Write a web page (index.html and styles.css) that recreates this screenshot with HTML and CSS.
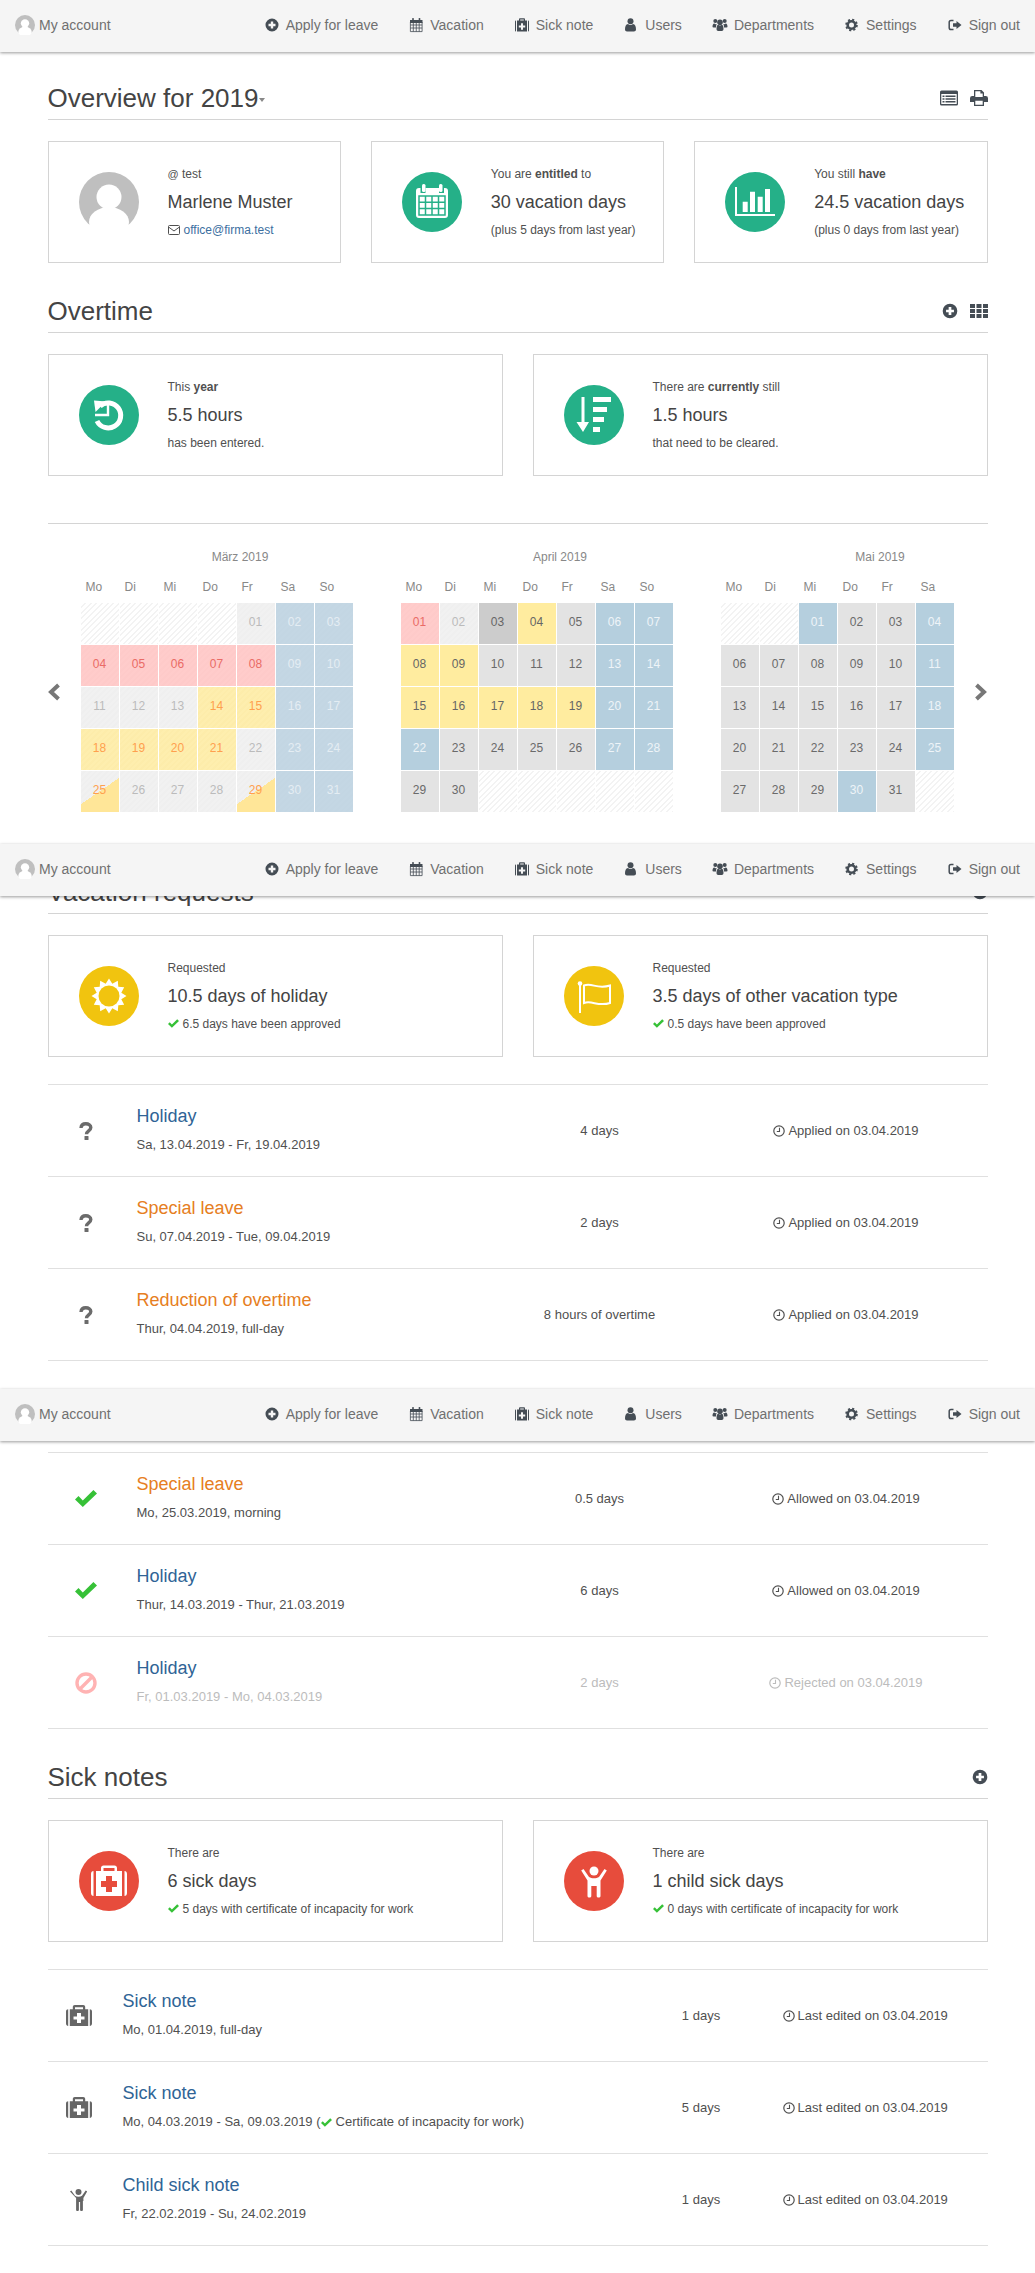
FILE: index.html
```html
<!DOCTYPE html>
<html lang="en">
<head>
    <meta charset="UTF-8">
    <title>Overview for 2019</title>
    <link rel="stylesheet" href="styles.css">
</head>
<body>
    <svg class="sprite" xmlns="http://www.w3.org/2000/svg">
        <symbol id="i-avatar" viewBox="0 0 60 60">
            <circle cx="30" cy="30" r="30" fill="#bfbfbf"/>
            <circle cx="30" cy="25" r="12.500" fill="#fff"/>
            <ellipse cx="30" cy="50" rx="20" ry="15" fill="#fff"/>
        </symbol>
        <symbol id="i-plus" viewBox="0 0 16 16">
            <path fill-rule="evenodd" d="M8 1.500a6.500 6.500 0 1 0 0 13 6.500 6.500 0 0 0 0-13zM6.800 4.500h2.400v2.300h2.300v2.400H9.200v2.300H6.800V9.200H4.500V6.800h2.300z"/>
        </symbol>
        <symbol id="i-calendar" viewBox="0 0 16 16">
            <path d="M2 3h12.500v3H2z"/>
            <rect x="4.200" y="1" width="1.600" height="3" rx=".6"/>
            <rect x="10.700" y="1" width="1.600" height="3" rx=".6"/>
            <path fill="none" stroke="currentColor" stroke-width=".8" d="M2.400 5v9.600h11.700V5M2.400 8h11.700M2.400 11h11.700M5.300 6v8.600M8.250 6v8.600M11.200 6v8.600"/>
        </symbol>
        <symbol id="i-medkit" viewBox="0 0 16 16">
            <path fill-rule="evenodd" d="M1 4.800C1 4 1.500 3.500 2 3.500v11c-.5 0-1-.5-1-1.300zM3 3.500h2V2.300C5 1.600 5.500 1.200 6 1.200h4c.5 0 1 .4 1 1.100v1.200h2v11H3zM6.200 3.500h3.600V2.500H6.200zM7 6.200v2.300H4.800v2H7v2.300h2v-2.300h2.200v-2H9V6.200zM14 3.500c.5 0 1 .5 1 1.300v8.400c0 .8-.5 1.300-1 1.300z"/>
        </symbol>
        <symbol id="i-user" viewBox="0 0 16 16">
            <circle cx="7.500" cy="4.200" r="3"/>
            <path d="M2 12.500c0-3 .8-5.200 3-5.500.7.600 1.500.9 2.500.9s1.800-.3 2.500-.9c2.200.3 3 2.500 3 5.500 0 1.300-.9 2-2 2H4c-1.100 0-2-.7-2-2z"/>
        </symbol>
        <symbol id="i-users" viewBox="0 0 16 16">
            <circle cx="3.300" cy="4" r="2"/>
            <circle cx="12.700" cy="4" r="2"/>
            <circle cx="8" cy="5.200" r="2.800"/>
            <path d="M.5 10c0-2 .6-3.400 1.800-3.400.5.400 1 .6 1.600.6l.9-.1C4.200 8 4 9 4 10.500H1.500c-.6 0-1-.2-1-.5zM15.500 10c0-2-.6-3.400-1.800-3.400-.5.400-1 .6-1.600.6l-.9-.1c.6.900.8 1.900.8 3.400h2.500c.6 0 1-.2 1-.5zM4.500 12c0-2.700.8-4.200 1.800-4.200.5.400 1 .6 1.700.6s1.200-.2 1.700-.6c1 0 1.800 1.500 1.800 4.200 0 1.200-.7 2-1.700 2H6.200c-1 0-1.700-.8-1.700-2z"/>
        </symbol>
        <symbol id="i-cog" viewBox="0 0 16 16">
            <circle cx="7.500" cy="8" r="3.800" fill="none" stroke="currentColor" stroke-width="2.600"/>
            <circle cx="7.500" cy="8" r="5.400" fill="none" stroke="currentColor" stroke-width="1.800" stroke-dasharray="2.120 2.120"/>
        </symbol>
        <symbol id="i-signout" viewBox="0 0 16 16">
            <path fill="none" stroke="currentColor" stroke-width="1.500" d="M6.500 3.500H4A1.800 1.800 0 0 0 2.200 5.300v5.400A1.800 1.800 0 0 0 4 12.500h2.500"/>
            <path d="M9.500 4l5 4-5 4V9.800H6V6.200h3.500z"/>
        </symbol>
        <symbol id="i-listalt" viewBox="0 0 18 15">
            <path fill-rule="evenodd" d="M1.500 0h15A1.500 1.500 0 0 1 18 1.500v12a1.500 1.500 0 0 1-1.500 1.500h-15A1.500 1.500 0 0 1 0 13.500v-12A1.500 1.500 0 0 1 1.500 0zM1.300 3.500v10h15.400v-10zM2.500 5h2v1.500h-2zM5.500 5h10v1.500h-10zM2.500 7.700h2v1.500h-2zM5.500 7.700h10v1.500h-10zM2.500 10.400h2v1.500h-2zM5.500 10.400h10v1.500h-10z"/>
        </symbol>
        <symbol id="i-print" viewBox="0 0 18 16">
            <path fill-rule="evenodd" d="M4 0h7.500L14 2.500V6h1.800A2.200 2.200 0 0 1 18 8.200V12h-4v4H4v-4H0V8.200A2.200 2.200 0 0 1 2.200 6H4zM5.300 1.300V7h7.400V3.500h-2.300V1.300zM5.300 10.800v3.900h7.400v-3.900z"/>
        </symbol>
        <symbol id="i-th" viewBox="0 0 18 14">
            <path d="M0 0h5v4H0zM6.500 0h5v4h-5zM13 0h5v4h-5zM0 5h5v4H0zM6.500 5h5v4h-5zM13 5h5v4h-5zM0 10h5v4H0zM6.500 10h5v4h-5zM13 10h5v4h-5z"/>
        </symbol>
        <symbol id="i-check" viewBox="0 0 22 17">
            <path d="M0 9.500l3.500-3.400 4.300 4.300L18.400 0 22 3.500 7.800 17z"/>
        </symbol>
        <symbol id="i-question" viewBox="0 0 14 18">
            <path fill="none" stroke="currentColor" stroke-width="3.400" d="M2 6C2.200 3 4.300 1.800 6.800 1.800c2.800 0 5 1.400 5 3.800 0 3.400-4.300 3.300-4.300 6.700"/>
            <rect x="5.500" y="14" width="4" height="4" rx=".6"/>
        </symbol>
        <symbol id="i-ban" viewBox="0 0 22 22">
            <circle cx="11" cy="11" r="9" fill="none" stroke="currentColor" stroke-width="3.400"/>
            <path stroke="currentColor" stroke-width="3.400" d="M4.500 17.500l13-13"/>
        </symbol>
        <symbol id="i-clock" viewBox="0 0 12 12">
            <circle cx="6" cy="6" r="5.200" fill="none" stroke="currentColor" stroke-width="1.200"/>
            <path fill="none" stroke="currentColor" stroke-width="1.100" d="M6.500 2.800v3.700H3.800"/>
        </symbol>
        <symbol id="i-mail" viewBox="0 0 12 10">
            <rect x=".5" y=".5" width="11" height="9" rx="1" fill="none" stroke="currentColor"/>
            <path fill="none" stroke="currentColor" d="M.8 2.200L6 6l5.200-3.800"/>
        </symbol>
        <symbol id="i-kit" viewBox="0 0 26 21">
            <path fill-rule="evenodd" d="M0 6.500C0 5 1 4.200 2.200 4.200V21C1 21 0 20 0 18.500zM3.800 4.200h3V2c0-1.200.8-2 2-2h8.400c1.200 0 2 .8 2 2v2.200h3V21H3.800zM9 4.200h8V2.200H9zM11 8v3.500H7.500v3H11V18h4v-3.500h3.500v-3H15V8zM23.800 4.200c1.200 0 2.200.8 2.200 2.300v12c0 1.500-1 2.500-2.200 2.500z"/>
        </symbol>
        <symbol id="i-child" viewBox="0 0 17 22">
            <circle cx="8.500" cy="3" r="3"/>
            <path d="M1.300 1.500l3.700 5.300c1 .7 2.100 1 3.500 1s2.500-.3 3.500-1l3.700-5.300 1.500 1-3.800 6.500v3H12.900V21c0 1.300-2.800 1.300-2.800 0v-8H8.900v8c0 1.300-2.800 1.300-2.800 0V9L0 2.500z"/>
        </symbol>
    </svg>

    <nav class="nav nav-first">
        <a class="nav-account"><svg class="nav-avatar"><use href="#i-avatar"/></svg>My account</a>
        <div class="nav-links">
            <a class="nav-item"><svg class="nav-icon"><use href="#i-plus"/></svg>Apply for leave</a>
            <a class="nav-item"><svg class="nav-icon"><use href="#i-calendar"/></svg>Vacation</a>
            <a class="nav-item"><svg class="nav-icon"><use href="#i-medkit"/></svg>Sick note</a>
            <a class="nav-item"><svg class="nav-icon"><use href="#i-user"/></svg>Users</a>
            <a class="nav-item"><svg class="nav-icon"><use href="#i-users"/></svg>Departments</a>
            <a class="nav-item"><svg class="nav-icon"><use href="#i-cog"/></svg>Settings</a>
            <a class="nav-item"><svg class="nav-icon"><use href="#i-signout"/></svg>Sign out</a>
        </div>
    </nav>
    <nav class="nav nav-second">
        <a class="nav-account"><svg class="nav-avatar"><use href="#i-avatar"/></svg>My account</a>
        <div class="nav-links">
            <a class="nav-item"><svg class="nav-icon"><use href="#i-plus"/></svg>Apply for leave</a>
            <a class="nav-item"><svg class="nav-icon"><use href="#i-calendar"/></svg>Vacation</a>
            <a class="nav-item"><svg class="nav-icon"><use href="#i-medkit"/></svg>Sick note</a>
            <a class="nav-item"><svg class="nav-icon"><use href="#i-user"/></svg>Users</a>
            <a class="nav-item"><svg class="nav-icon"><use href="#i-users"/></svg>Departments</a>
            <a class="nav-item"><svg class="nav-icon"><use href="#i-cog"/></svg>Settings</a>
            <a class="nav-item"><svg class="nav-icon"><use href="#i-signout"/></svg>Sign out</a>
        </div>
    </nav>
    <nav class="nav nav-third">
        <a class="nav-account"><svg class="nav-avatar"><use href="#i-avatar"/></svg>My account</a>
        <div class="nav-links">
            <a class="nav-item"><svg class="nav-icon"><use href="#i-plus"/></svg>Apply for leave</a>
            <a class="nav-item"><svg class="nav-icon"><use href="#i-calendar"/></svg>Vacation</a>
            <a class="nav-item"><svg class="nav-icon"><use href="#i-medkit"/></svg>Sick note</a>
            <a class="nav-item"><svg class="nav-icon"><use href="#i-user"/></svg>Users</a>
            <a class="nav-item"><svg class="nav-icon"><use href="#i-users"/></svg>Departments</a>
            <a class="nav-item"><svg class="nav-icon"><use href="#i-cog"/></svg>Settings</a>
            <a class="nav-item"><svg class="nav-icon"><use href="#i-signout"/></svg>Sign out</a>
        </div>
    </nav>

    <main class="container">
        <div class="heading">
            <h1 class="heading-title">Overview for 2019<span class="caret"></span></h1>
            <div class="heading-actions">
                <svg class="action-icon"><use href="#i-listalt"/></svg>
                <svg class="action-icon"><use href="#i-print"/></svg>
            </div>
        </div>
        <div class="boxes boxes-three">
            <div class="box">
                <svg class="box-icon"><use href="#i-avatar"/></svg>
                <div class="box-text">
                    <div class="box-line"><span class="at">@</span> test</div>
                    <div class="box-main">Marlene Muster</div>
                    <div class="box-line"><svg class="mail-icon"><use href="#i-mail"/></svg><a class="mail-link">office@firma.test</a></div>
                </div>
            </div>
            <div class="box">
                <svg class="box-icon" viewBox="0 0 60 60">
                    <circle cx="30" cy="30" r="30" fill="#25b088"/>
                    <rect x="20" y="12" width="3.500" height="8" rx="1.500" fill="#fff"/>
                    <rect x="37" y="12" width="3.500" height="8" rx="1.500" fill="#fff"/>
                    <path fill="#fff" d="M14 19a3 3 0 0 1 3-3h1.500v5h5v-5h13.500v5h5v-5H43a3 3 0 0 1 3 3v24a3 3 0 0 1-3 3H17a3 3 0 0 1-3-3z"/>
                    <path fill="none" stroke="#25b088" stroke-width="1.500" d="M17 24h26v19H17zM17 30.300h26M17 36.600h26M23.500 24v19M30 24v19M36.500 24v19"/>
                </svg>
                <div class="box-text">
                    <div class="box-line">You are <b>entitled</b> to</div>
                    <div class="box-main">30 vacation days</div>
                    <div class="box-line">(plus 5 days from last year)</div>
                </div>
            </div>
            <div class="box">
                <svg class="box-icon" viewBox="0 0 60 60">
                    <circle cx="30" cy="30" r="30" fill="#25b088"/>
                    <path fill="#fff" d="M10 15h2v27h38v2H10zM17.700 29.700h5V40h-5zM25 19.700h5V40h-5zM32.700 24.700h5V40h-5zM40 17h5v23h-5z"/>
                </svg>
                <div class="box-text">
                    <div class="box-line">You still <b>have</b></div>
                    <div class="box-main">24.5 vacation days</div>
                    <div class="box-line">(plus 0 days from last year)</div>
                </div>
            </div>
        </div>

        <div class="heading heading-next">
            <h2 class="heading-title">Overtime</h2>
            <div class="heading-actions">
                <svg class="action-icon plus-icon"><use href="#i-plus"/></svg>
                <svg class="action-icon"><use href="#i-th"/></svg>
            </div>
        </div>
        <div class="boxes boxes-two">
            <div class="box">
                <svg class="box-icon" viewBox="0 0 60 60">
                    <circle cx="30" cy="30" r="30" fill="#25b088"/>
                    <path fill="none" stroke="#fff" stroke-width="5" d="M21 21a12.500 12.500 0 1 1-3 15"/>
                    <path fill="#fff" d="M15 15.500l12 1-10.500 10.500z"/>
                    <path fill="none" stroke="#fff" stroke-width="2.400" d="M29 20v10H16"/>
                </svg>
                <div class="box-text">
                    <div class="box-line">This <b>year</b></div>
                    <div class="box-main">5.5 hours</div>
                    <div class="box-line">has been entered.</div>
                </div>
            </div>
            <div class="box">
                <svg class="box-icon" viewBox="0 0 60 60">
                    <circle cx="30" cy="30" r="30" fill="#25b088"/>
                    <path fill="#fff" d="M17.500 12h3v25h4.500L19 47l-6.500-10h5zM29 12h18v5H29zM29 22h14v5H29zM29 32h11v5H29zM29 42h7v5h-7z"/>
                </svg>
                <div class="box-text">
                    <div class="box-line">There are <b>currently</b> still</div>
                    <div class="box-main">1.5 hours</div>
                    <div class="box-line">that need to be cleared.</div>
                </div>
            </div>
        </div>

        <section class="calendar">
            <svg class="chevron" viewBox="0 0 13 18"><path d="M10.500 2L3 9l7.500 7"/></svg>
            <div class="months">
                <div class="month">
                    <div class="month-name">März 2019</div>
                    <div class="week">
                        <span>Mo</span><span>Di</span><span>Mi</span><span>Do</span><span>Fr</span><span>Sa</span><span>So</span>
                    </div>
                    <div class="days">
                        <div class="day empty"></div><div class="day empty"></div><div class="day empty"></div><div class="day empty"></div><div class="day past">01</div><div class="day off-past">02</div><div class="day off-past">03</div>
                        <div class="day sick-past">04</div><div class="day sick-past">05</div><div class="day sick-past">06</div><div class="day sick-past">07</div><div class="day sick-past">08</div><div class="day off-past">09</div><div class="day off-past">10</div>
                        <div class="day past">11</div><div class="day past">12</div><div class="day past">13</div><div class="day leave-past">14</div><div class="day leave-past">15</div><div class="day off-past">16</div><div class="day off-past">17</div>
                        <div class="day leave-past">18</div><div class="day leave-past">19</div><div class="day leave-past">20</div><div class="day leave-past">21</div><div class="day past">22</div><div class="day off-past">23</div><div class="day off-past">24</div>
                        <div class="day half-past">25</div><div class="day past">26</div><div class="day past">27</div><div class="day past">28</div><div class="day half-past">29</div><div class="day off-past">30</div><div class="day off-past">31</div>
                    </div>
                </div>
                <div class="month">
                    <div class="month-name">April 2019</div>
                    <div class="week">
                        <span>Mo</span><span>Di</span><span>Mi</span><span>Do</span><span>Fr</span><span>Sa</span><span>So</span>
                    </div>
                    <div class="days">
                        <div class="day sick-past">01</div><div class="day past">02</div><div class="day today">03</div><div class="day leave">04</div><div class="day">05</div><div class="day off">06</div><div class="day off">07</div>
                        <div class="day leave">08</div><div class="day leave">09</div><div class="day">10</div><div class="day">11</div><div class="day">12</div><div class="day off">13</div><div class="day off">14</div>
                        <div class="day leave">15</div><div class="day leave">16</div><div class="day leave">17</div><div class="day leave">18</div><div class="day leave">19</div><div class="day off">20</div><div class="day off">21</div>
                        <div class="day off">22</div><div class="day">23</div><div class="day">24</div><div class="day">25</div><div class="day">26</div><div class="day off">27</div><div class="day off">28</div>
                        <div class="day">29</div><div class="day">30</div><div class="day empty"></div><div class="day empty"></div><div class="day empty"></div><div class="day empty"></div><div class="day empty"></div>
                    </div>
                </div>
                <div class="month month-cut">
                    <div class="month-name">Mai 2019</div>
                    <div class="week">
                        <span>Mo</span><span>Di</span><span>Mi</span><span>Do</span><span>Fr</span><span>Sa</span>
                    </div>
                    <div class="days">
                        <div class="day empty"></div><div class="day empty"></div><div class="day off">01</div><div class="day">02</div><div class="day">03</div><div class="day off">04</div>
                        <div class="day">06</div><div class="day">07</div><div class="day">08</div><div class="day">09</div><div class="day">10</div><div class="day off">11</div>
                        <div class="day">13</div><div class="day">14</div><div class="day">15</div><div class="day">16</div><div class="day">17</div><div class="day off">18</div>
                        <div class="day">20</div><div class="day">21</div><div class="day">22</div><div class="day">23</div><div class="day">24</div><div class="day off">25</div>
                        <div class="day">27</div><div class="day">28</div><div class="day">29</div><div class="day off">30</div><div class="day">31</div><div class="day empty"></div>
                    </div>
                </div>
            </div>
            <svg class="chevron" viewBox="0 0 13 18"><path d="M2.500 2L10 9l-7.500 7"/></svg>
        </section>

        <div class="heading heading-calendar">
            <h2 class="heading-title">Vacation requests</h2>
            <div class="heading-actions">
                <svg class="action-icon plus-icon"><use href="#i-plus"/></svg>
            </div>
        </div>
        <div class="boxes boxes-two">
            <div class="box">
                <svg class="box-icon" viewBox="0 0 60 60">
                    <circle cx="30" cy="30" r="30" fill="#f1c40f"/>
                    <polygon fill="#fff" points="30,12.500 33.300,17.700 38.800,14.800 39.300,20.700 45.200,21.200 42.300,26.700 47.500,30 42.300,33.300 45.200,38.800 39.300,39.300 38.800,45.200 33.300,42.300 30,47.500 26.700,42.300 21.200,45.200 20.700,39.300 14.800,38.800 17.700,33.300 12.500,30 17.700,26.700 14.800,21.200 20.700,20.700 21.200,14.800 26.700,17.700"/>
                    <circle cx="30" cy="30" r="10.500" fill="#f1c40f"/>
                </svg>
                <div class="box-text">
                    <div class="box-line">Requested</div>
                    <div class="box-main">10.5 days of holiday</div>
                    <div class="box-line"><svg class="check-icon"><use href="#i-check"/></svg>6.5 days have been approved</div>
                </div>
            </div>
            <div class="box">
                <svg class="box-icon" viewBox="0 0 60 60">
                    <circle cx="30" cy="30" r="30" fill="#f1c40f"/>
                    <circle cx="16" cy="17.500" r="2.300" fill="#fff"/>
                    <path fill="none" stroke="#fff" stroke-width="2" d="M16 18v29"/>
                    <path fill="none" stroke="#fff" stroke-width="2" d="M20 19.500c8-3 13 4 26 0v17.500c-12 4-18-3-26 0z"/>
                </svg>
                <div class="box-text">
                    <div class="box-line">Requested</div>
                    <div class="box-main">3.5 days of other vacation type</div>
                    <div class="box-line"><svg class="check-icon"><use href="#i-check"/></svg>0.5 days have been approved</div>
                </div>
            </div>
        </div>

        <div class="list list-vacation">
            <div class="row">
                <div class="row-icon"><svg class="state-question"><use href="#i-question"/></svg></div>
                <div class="row-main">
                    <a class="row-title blue">Holiday</a>
                    <div class="row-date">Sa, 13.04.2019 - Fr, 19.04.2019</div>
                </div>
                <div class="row-days">4 days</div>
                <div class="row-status"><svg class="clock-icon"><use href="#i-clock"/></svg>Applied on 03.04.2019</div>
            </div>
            <div class="row">
                <div class="row-icon"><svg class="state-question"><use href="#i-question"/></svg></div>
                <div class="row-main">
                    <a class="row-title orange">Special leave</a>
                    <div class="row-date">Su, 07.04.2019 - Tue, 09.04.2019</div>
                </div>
                <div class="row-days">2 days</div>
                <div class="row-status"><svg class="clock-icon"><use href="#i-clock"/></svg>Applied on 03.04.2019</div>
            </div>
            <div class="row">
                <div class="row-icon"><svg class="state-question"><use href="#i-question"/></svg></div>
                <div class="row-main">
                    <a class="row-title orange">Reduction of overtime</a>
                    <div class="row-date">Thur, 04.04.2019, full-day</div>
                </div>
                <div class="row-days">8 hours of overtime</div>
                <div class="row-status"><svg class="clock-icon"><use href="#i-clock"/></svg>Applied on 03.04.2019</div>
            </div>
            <div class="row">
                <div class="row-icon"></div>
                <div class="row-main">
                    <a class="row-title blue">Holiday</a>
                </div>
            </div>
            <div class="row">
                <div class="row-icon"><svg class="state-check"><use href="#i-check"/></svg></div>
                <div class="row-main">
                    <a class="row-title orange">Special leave</a>
                    <div class="row-date">Mo, 25.03.2019, morning</div>
                </div>
                <div class="row-days">0.5 days</div>
                <div class="row-status"><svg class="clock-icon"><use href="#i-clock"/></svg>Allowed on 03.04.2019</div>
            </div>
            <div class="row">
                <div class="row-icon"><svg class="state-check"><use href="#i-check"/></svg></div>
                <div class="row-main">
                    <a class="row-title blue">Holiday</a>
                    <div class="row-date">Thur, 14.03.2019 - Thur, 21.03.2019</div>
                </div>
                <div class="row-days">6 days</div>
                <div class="row-status"><svg class="clock-icon"><use href="#i-clock"/></svg>Allowed on 03.04.2019</div>
            </div>
            <div class="row row-rejected">
                <div class="row-icon"><svg class="state-ban"><use href="#i-ban"/></svg></div>
                <div class="row-main">
                    <a class="row-title blue">Holiday</a>
                    <div class="row-date">Fr, 01.03.2019 - Mo, 04.03.2019</div>
                </div>
                <div class="row-days">2 days</div>
                <div class="row-status"><svg class="clock-icon"><use href="#i-clock"/></svg>Rejected on 03.04.2019</div>
            </div>
        </div>

        <div class="heading heading-next">
            <h2 class="heading-title">Sick notes</h2>
            <div class="heading-actions">
                <svg class="action-icon plus-icon"><use href="#i-plus"/></svg>
            </div>
        </div>
        <div class="boxes boxes-two">
            <div class="box">
                <svg class="box-icon" viewBox="0 0 60 60">
                    <circle cx="30" cy="30" r="30" fill="#e74c3c"/>
                    <path fill="#fff" fill-rule="evenodd" d="M12 23c0-1.800 1-3 2.500-3v25c-1.500 0-2.500-1.200-2.500-3zM17 20h5v-3c0-1.500 1-2.500 2.500-2.500h11c1.500 0 2.500 1 2.500 2.500v3h5v25H17zM24.500 20h11v-3h-11zM45.500 20c1.500 0 2.500 1.200 2.500 3v19c0 1.800-1 3-2.500 3z"/>
                    <path fill="#e74c3c" d="M27 25h6v5h5v6h-5v5h-6v-5h-5v-6h5z"/>
                </svg>
                <div class="box-text">
                    <div class="box-line">There are</div>
                    <div class="box-main">6 sick days</div>
                    <div class="box-line"><svg class="check-icon"><use href="#i-check"/></svg>5 days with certificate of incapacity for work</div>
                </div>
            </div>
            <div class="box">
                <svg class="box-icon" viewBox="0 0 60 60">
                    <circle cx="30" cy="30" r="30" fill="#e74c3c"/>
                    <circle cx="30" cy="20" r="4.500" fill="#fff"/>
                    <path fill="#fff" d="M19.500 18l5.500 8c1.500 1 3 1.300 5 1.300s3.500-.3 5-1.300l5.500-8 2.300 1.600-6.300 10V45c0 2-3.800 2-3.800 0V35h-5.400v10c0 2-3.800 2-3.800 0V29.600l-6.300-10z"/>
                </svg>
                <div class="box-text">
                    <div class="box-line">There are</div>
                    <div class="box-main">1 child sick days</div>
                    <div class="box-line"><svg class="check-icon"><use href="#i-check"/></svg>0 days with certificate of incapacity for work</div>
                </div>
            </div>
        </div>

        <div class="list list-sick">
            <div class="row">
                <div class="row-icon"><svg class="state-kit"><use href="#i-kit"/></svg></div>
                <div class="row-main">
                    <a class="row-title blue">Sick note</a>
                    <div class="row-date">Mo, 01.04.2019, full-day</div>
                </div>
                <div class="row-days">1 days</div>
                <div class="row-status"><svg class="clock-icon"><use href="#i-clock"/></svg>Last edited on 03.04.2019</div>
            </div>
            <div class="row">
                <div class="row-icon"><svg class="state-kit"><use href="#i-kit"/></svg></div>
                <div class="row-main">
                    <a class="row-title blue">Sick note</a>
                    <div class="row-date">Mo, 04.03.2019 - Sa, 09.03.2019 (<svg class="check-icon check-inline"><use href="#i-check"/></svg>Certificate of incapacity for work)</div>
                </div>
                <div class="row-days">5 days</div>
                <div class="row-status"><svg class="clock-icon"><use href="#i-clock"/></svg>Last edited on 03.04.2019</div>
            </div>
            <div class="row">
                <div class="row-icon"><svg class="state-child"><use href="#i-child"/></svg></div>
                <div class="row-main">
                    <a class="row-title blue">Child sick note</a>
                    <div class="row-date">Fr, 22.02.2019 - Su, 24.02.2019</div>
                </div>
                <div class="row-days">1 days</div>
                <div class="row-status"><svg class="clock-icon"><use href="#i-clock"/></svg>Last edited on 03.04.2019</div>
            </div>
        </div>
    </main>
</body>
</html>
```

FILE: styles.css
```css
* {
    box-sizing: border-box;
}
html, body {
    margin: 0;
}
body {
    position: relative;
    font-family: "Liberation Sans", Arial, sans-serif;
    font-size: 13px;
    color: #444;
    background-color: #fff;
}
.sprite {
    display: none;
}

/* sticky nav, caught three times by the long screenshot */
.nav {
    position: absolute;
    left: 0;
    right: 0;
    z-index: 10;
    height: 52px;
    display: flex;
    align-items: center;
    justify-content: space-between;
    padding-bottom: 2px;
    background-color: #f5f5f5;
    box-shadow: 0 1px 3px rgba(0, 0, 0, 0.4);
    font-size: 14px;
    color: #707070;
}
.nav-first {
    top: 0;
}
.nav-second {
    top: 844px;
}
.nav-third {
    top: 1389px;
}
.nav-account {
    display: flex;
    align-items: center;
    padding-left: 15px;
}
.nav-avatar {
    width: 20px;
    height: 20px;
    margin-right: 4px;
}
.nav-links {
    display: flex;
    padding-right: 15px;
}
.nav-item {
    display: flex;
    align-items: center;
    margin-left: 30px;
}
.nav-icon {
    width: 16px;
    height: 16px;
    margin-right: 6px;
    fill: #454d55;
    color: #454d55;
}

.container {
    width: 970px;
    margin: 0 auto;
    padding: 80px 15px 27px;
}

.heading {
    display: flex;
    justify-content: space-between;
    align-items: center;
    padding-bottom: 3px;
    border-bottom: 1px solid #d4d4d4;
}
.heading-next {
    margin-top: 30px;
}
.heading-calendar {
    margin-top: 62px;
}
.heading-title {
    margin: 0;
    font-size: 26px;
    font-weight: normal;
    line-height: 36px;
    color: #444;
}
.caret {
    display: inline-block;
    margin-left: 1px;
    vertical-align: 5px;
    border-top: 4px solid #888;
    border-left: 3.5px solid transparent;
    border-right: 3.5px solid transparent;
}
.heading-actions {
    display: flex;
    align-items: center;
    gap: 12px;
}
.action-icon {
    width: 18px;
    height: 16px;
    fill: #454d55;
    color: #454d55;
}
.plus-icon {
    width: 18px;
    height: 18px;
    margin-right: -1px;
}

.boxes {
    display: grid;
    gap: 30px;
    margin-top: 21px;
}
.boxes-three {
    grid-template-columns: repeat(3, minmax(0, 1fr));
}
.boxes-two {
    grid-template-columns: repeat(2, minmax(0, 1fr));
}
.box {
    display: flex;
    align-items: center;
    height: 122px;
    padding: 0 30px;
    border: 1px solid #d4d4d4;
}
.box-icon {
    flex: none;
    width: 60px;
    height: 60px;
    margin-right: 29px;
}
.box-text {
    min-width: 0;
    white-space: nowrap;
}
.box-line {
    font-size: 12px;
    line-height: 28px;
    color: #505050;
}
.box-main {
    font-size: 18px;
    line-height: 28px;
    color: #444;
}
.at {
    font-size: 11px;
}
.mail-icon {
    width: 12px;
    height: 10px;
    margin-right: 4px;
    vertical-align: -1px;
}
.mail-link {
    color: #3c6f9f;
}
.check-icon {
    width: 11px;
    height: 9px;
    margin-right: 4px;
    fill: #36c137;
}
.check-inline {
    margin-right: 4px;
    vertical-align: -1px;
}

.calendar {
    display: flex;
    align-items: center;
    margin: 47px 0 0;
    padding-top: 25px;
    border-top: 1px solid #d4d4d4;
}
.chevron {
    flex: none;
    width: 13px;
    height: 18px;
    margin-top: 22px;
    fill: none;
    stroke: #777;
    stroke-width: 4;
}
.months {
    flex: none;
    display: flex;
    width: 875px;
    margin: 0 19px;
}
.month {
    flex: none;
    width: 320px;
    padding-left: 1px;
}
.month-cut {
    width: 235px;
}
.month-name {
    width: 319px;
    font-size: 12px;
    line-height: 16px;
    text-align: center;
    color: #888;
}
.week {
    display: grid;
    grid-template-columns: repeat(7, 39px);
    margin-top: 14px;
    font-size: 12px;
    line-height: 16px;
    color: #888;
}
.week span {
    padding-left: 5px;
}
.days {
    display: grid;
    grid-template-columns: repeat(7, 38px);
    grid-auto-rows: 41px;
    gap: 1px;
    margin-top: 8px;
}
.month-cut .week {
    grid-template-columns: repeat(6, 39px);
}
.month-cut .days {
    grid-template-columns: repeat(6, 38px);
}
.day {
    display: flex;
    align-items: center;
    justify-content: center;
    padding-bottom: 3px;
    font-size: 12px;
    color: #6a6a6a;
    background-color: #e3e3e3;
}
.empty {
    background: repeating-linear-gradient(135deg, #fff 0 2.5px, #f3f3f3 2.5px 4px);
}
.past {
    color: #bbb;
    background: repeating-linear-gradient(135deg, #f1f1f1 0 2px, #efefef 2px 4px);
}
.off {
    color: #eef4f8;
    background-color: #b5cfde;
}
.off-past {
    color: #e4edf3;
    background: repeating-linear-gradient(135deg, #c4d7e4 0 2px, #c3d6e3 2px 4px);
}
.sick-past {
    color: #ea6b66;
    background: repeating-linear-gradient(135deg, #ffcccb 0 2px, #fecac9 2px 4px);
}
.leave {
    color: #666;
    background-color: #ffec9f;
}
.leave-past {
    color: #ffa04e;
    background: repeating-linear-gradient(135deg, #feeeae 0 2px, #fdecaa 2px 4px);
}
.today {
    color: #666;
    background-color: #ccc;
}
.half-past {
    color: #ffa04e;
    background:
        linear-gradient(#ffe698, #ffe698) left bottom / 100% 8px no-repeat,
        linear-gradient(to bottom right, transparent 50%, #ffe698 50%) left 7px / 100% 26px no-repeat,
        repeating-linear-gradient(135deg, #f1f1f1 0 2px, #efefef 2px 4px);
}

.list {
    margin-top: 27px;
    border-top: 1px solid #e0e0e0;
}
.row {
    display: grid;
    align-items: center;
    height: 92px;
    border-bottom: 1px solid #e0e0e0;
}
.list-vacation .row {
    grid-template-columns: 77px 370px 210px 1fr;
}
.list-sick .row {
    grid-template-columns: 62px 510px 163px 1fr;
}
.list-vacation .row-main {
    padding-left: 12px;
}
.list-sick .row-main {
    padding-left: 13px;
}
.list-sick .row-status {
    text-align: left;
}
.row-icon {
    display: flex;
    align-items: center;
    justify-content: center;
}
.row-main {
    padding-bottom: 6px;
    white-space: nowrap;
}
.row-title {
    display: block;
    font-size: 18px;
    line-height: 30px;
}
.blue {
    color: #2f6496;
}
.orange {
    color: #e67e22;
}
.row-date {
    margin-top: 5px;
    line-height: 18px;
    color: #505050;
}
.row-days {
    text-align: center;
    color: #505050;
}
.row-status {
    text-align: center;
    white-space: nowrap;
    color: #505050;
}
.clock-icon {
    width: 12px;
    height: 12px;
    margin-right: 3px;
    vertical-align: -2px;
}
.row-rejected .row-date,
.row-rejected .row-days,
.row-rejected .row-status {
    color: #bcbcbc;
}
.state-question {
    width: 14px;
    height: 18px;
    fill: #6b6b6b;
    color: #6b6b6b;
}
.state-check {
    width: 22px;
    height: 17px;
    fill: #36c137;
}
.state-ban {
    width: 22px;
    height: 22px;
    color: #ffb3b3;
}
.state-kit {
    width: 26px;
    height: 21px;
    fill: #666;
}
.state-child {
    width: 17px;
    height: 22px;
    fill: #666;
}
```
